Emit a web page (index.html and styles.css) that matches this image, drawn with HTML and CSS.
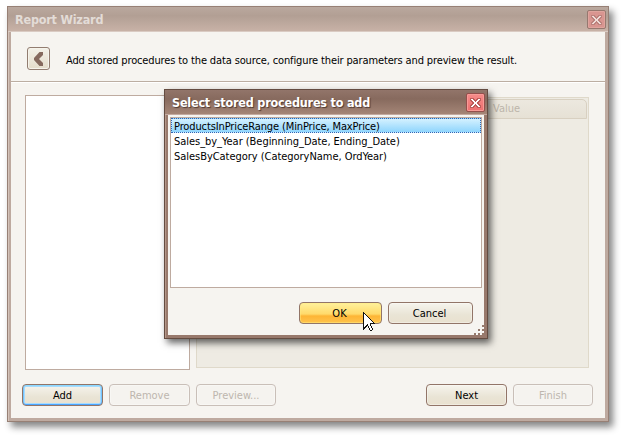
FILE: index.html
```html
<!DOCTYPE html>
<html lang="en">
<head>
<meta charset="utf-8">
<title>Report Wizard</title>
<link rel="stylesheet" href="styles.css">
</head>
<body>
<main class="window wizard">
  <header class="titlebar">
    <h1>Report Wizard</h1>
    <button class="close" aria-label="Close"><svg width="11" height="10" viewBox="0 0 11 10" shape-rendering="crispEdges"><path class="x-edge" d="M0 0h4v1h1v1h1V1h1V0h4v3h-1v1H9v2h1v1h1v3H7V9H6V8H5v1H4v1H0V7h1V6h1V4H1V3H0z"/><path class="x-fill" d="M1 1h2v1h1v1h1v1h1V3h1V2h1V1h2v1H9v1H8v1H7v2h1v1h1v1h1v1H8V8H7V7H6V6H5v1H4v1H3v1H1V8h1V7h1V6h1V4H3V3H2V2H1z"/></svg></button>
  </header>
  <div class="client">
    <section class="intro">
      <button class="back" aria-label="Back"><svg width="12" height="16" viewBox="0 0 12 16"><path d="M6.5 1H10v3L6 8l4 4v3H6.5L1 9V7z"/></svg></button>
      <p>Add stored procedures to the data source, configure their parameters and preview the result.</p>
    </section>
    <section class="panes">
      <div class="list"></div>
      <div class="grid"><div class="grid-head">Value</div></div>
    </section>
    <footer class="actions">
      <button class="btn focused">Add</button>
      <button class="btn" disabled>Remove</button>
      <button class="btn preview" disabled>Preview...</button>
      <button class="btn next">Next</button>
      <button class="btn finish" disabled>Finish</button>
    </footer>
  </div>
</main>
<div class="window dialog" role="dialog">
  <header class="titlebar">
    <h2>Select stored procedures to add</h2>
    <button class="close" aria-label="Close"><svg width="11" height="10" viewBox="0 0 11 10" shape-rendering="crispEdges"><path class="x-edge" d="M0 0h4v1h1v1h1V1h1V0h4v3h-1v1H9v2h1v1h1v3H7V9H6V8H5v1H4v1H0V7h1V6h1V4H1V3H0z"/><path class="x-fill" d="M1 1h2v1h1v1h1v1h1V3h1V2h1V1h2v1H9v1H8v1H7v2h1v1h1v1h1v1H8V8H7V7H6V6H5v1H4v1H3v1H1V8h1V7h1V6h1V4H3V3H2V2H1z"/></svg></button>
  </header>
  <div class="dialog-body">
    <ul class="procedures">
      <li class="selected">ProductsInPriceRange (MinPrice, MaxPrice)</li>
      <li>Sales_by_Year (Beginning_Date, Ending_Date)</li>
      <li>SalesByCategory (CategoryName, OrdYear)</li>
    </ul>
    <div class="dialog-actions">
      <button class="btn ok">OK</button>
      <button class="btn cancel">Cancel</button>
    </div>
  </div>
  <svg class="grip" width="10" height="10" viewBox="0 0 10 10" shape-rendering="crispEdges"><path class="grip-light" d="M9 1h1v2H9zM5 5h2v2H5zM9 5h1v2H9zM1 9h2v1H1zM5 9h2v1H5zM9 9h1v1H9z"/><path class="grip-dark" d="M8 0h2v2H8zM4 4h2v2H4zM8 4h2v2H8zM0 8h2v2H0zM4 8h2v2H4zM8 8h2v2H8z"/></svg>
</div>
<svg class="cursor" width="12" height="20" viewBox="0 0 12 20" shape-rendering="crispEdges"><path class="cursor-edge" d="M0 0h1v1h1v1h1v1h1v1h1v1h1v1h1v1h1v1h1v1h1v1h1v1h1v1H8v2h1v2h1v2H9v1H7v-1H6v-2H5v-2H4v1H3v1H2v1H1v1H0z"/><path class="cursor-fill" d="M1 2h1v1h1v1h1v1h1v1h1v1h1v1h1v1h1v1h1v1H7v3h1v2h1v2H7v-2H6v-2H5v-2H4v1H3v1H2v1H1z"/></svg>
</body>
</html>
```
FILE: styles.css
```css
* { box-sizing: border-box; }
body {
  margin: 0;
  width: 622px;
  height: 436px;
  padding: 6px 0 0 7px;
  overflow: hidden;
  background: #fff;
  color: #000;
  font: 11px/15px "DejaVu Sans Condensed", "Noto Sans", sans-serif;
}
button { font: inherit; color: inherit; padding: 0; }
h1, h2, p, ul { margin: 0; padding: 0; }
h1, h2, p, li { white-space: nowrap; }

.window { display: flex; flex-direction: column; border: 1px solid; }
.wizard {
  width: 602px;
  height: 416px;
  padding: 0 3px 3px;
  border-color: #978075;
  background: #beaaa0;
  box-shadow: inset 1px 0 #d4c3b9, 4px 5px 7px rgba(0, 0, 0, .48);
}
.titlebar {
  display: flex;
  justify-content: space-between;
  flex: none;
  height: 25px;
  margin: 0 -3px;
  padding: 3px 2px 0 7px;
}
.wizard .titlebar {
  background: linear-gradient(#baa89e, #b29f94 35%, #c7b1a6 94%, #dacbc3 96%);
}
h1, h2 { font: bold 12.5px/19px "DejaVu Sans Condensed", sans-serif; letter-spacing: -0.2px; }
h1 { color: #e3dcd7; }
h2 { color: #fff; text-shadow: 1px 1px 1px #4f3931; }
.close {
  display: grid;
  place-items: center;
  width: 19px;
  height: 19px;
  border: 1px solid #96786f;
  border-radius: 2px;
  background: #d99590;
  box-shadow: inset 0 0 0 1px #dfa49d;
}
.x-edge { fill: #bc827d; }
.x-fill { fill: #efdcd8; }

.client { flex: 1; display: flex; flex-direction: column; background: #f6f4f0; }
.intro {
  display: flex;
  align-items: flex-start;
  height: 50px;
  padding: 15px 0 0 16px;
  border-bottom: 1px solid #bcaea2;
}
.intro p { margin: 6px 0 0 16px; letter-spacing: -0.13px; }
.back {
  display: grid;
  place-items: center;
  width: 23px;
  height: 23px;
  border: 1px solid #927d70;
  border-radius: 3px;
  background: linear-gradient(#f3f1e8, #e4dcca);
  box-shadow: inset 0 0 0 1px #f6f3eb;
}
.back path { fill: #85695d; }
.panes {
  display: flex;
  height: 289px;
  padding: 12px 16px 0 14px;
  border-top: 1px solid #fff;
  gap: 6px;
}
.list { width: 165px; height: 275px; border: 1px solid #beaba0; background: #fff; }
.grid {
  flex: 1;
  height: 271px;
  margin-top: 2px;
  padding: 1px;
  border: 1px solid #dfd9ca;
  background: #eeebe3;
}
.grid-head {
  height: 20px;
  border: 1px solid #d8d0c1;
  border-radius: 0 5px 0 0;
  padding: 2px 0 0 294px;
  line-height: 14px;
  background: linear-gradient(#ece8df, #e6e1d5);
  color: #bcb5aa;
}
.actions { display: flex; gap: 6px; padding: 13px 0 0 11px; }
.btn {
  flex: none;
  width: 81px;
  height: 22px;
  border: 1px solid #927568;
  border-radius: 4px;
  background: linear-gradient(#f6f4ed, #e9e4d5 60%, #e9e1cf);
  box-shadow: inset 0 0 0 1px rgba(255, 255, 255, .35);
  line-height: 19px;
}
.btn:disabled { border-color: #c9bfb8; background: #f5f3ef; color: #bdb6ae; }
.btn.focused {
  box-shadow: inset 0 1px #8dd9ff, inset 0 -1px #4ba5ff, inset 1px 0 #75c5ff, inset -1px 0 #75c5ff, inset 0 0 0 2px #a7dcff;
}
.preview, .finish { width: 80px; }
.next { margin-left: 144px; }

.dialog {
  position: absolute;
  left: 164px;
  top: 89px;
  width: 324px;
  height: 250px;
  padding: 0 3px 3px;
  border-color: #644c41;
  background: #98796c;
  box-shadow: inset 1px 0 #b59789, 3px 4px 7px rgba(0, 0, 0, .6);
}
.dialog .titlebar { background: linear-gradient(#92756a, #876a5e 35%, #a38475 94%, #c3aaa0 96%); }
.dialog .close { border-color: #944f4c; background: linear-gradient(#f58b89, #ef706f); box-shadow: inset 0 0 0 1px #f79a96; }
.dialog .x-edge { fill: #bd5d5a; }
.dialog .x-fill { fill: #fff; }
.dialog-body { flex: 1; padding: 2px; background: #f6f4f0; }
.procedures {
  height: 171px;
  list-style: none;
  border: 1px solid #beaba0;
  background: #fff;
}
.procedures li { height: 15px; padding: 0 0 0 3px; line-height: 17px; letter-spacing: -0.04px; }
.procedures .selected {
  padding: 0 0 0 2px;
  border: 1px dotted #3265b4;
  line-height: 15px;
  letter-spacing: -0.12px;
  background: linear-gradient(#d4f1ff, #8fd5fd);
}
.dialog-actions { display: flex; gap: 6px; padding: 14px 0 0 129px; }
.ok { width: 83px; padding-right: 2px; background: linear-gradient(#fff19c, #ffda6b 55%, #fdb535 65%, #ffc34d); box-shadow: inset 0 0 0 1px rgba(255, 236, 130, .5); }
.cancel { width: 85px; padding-right: 2px; }
.grip { position: absolute; right: 3px; bottom: 3px; }
.grip-light { fill: #fff; }
.grip-dark { fill: #957a6d; }
.cursor { position: absolute; left: 363px; top: 312px; }
.cursor-edge { fill: #111; }
.cursor-fill { fill: #fff; }
```
